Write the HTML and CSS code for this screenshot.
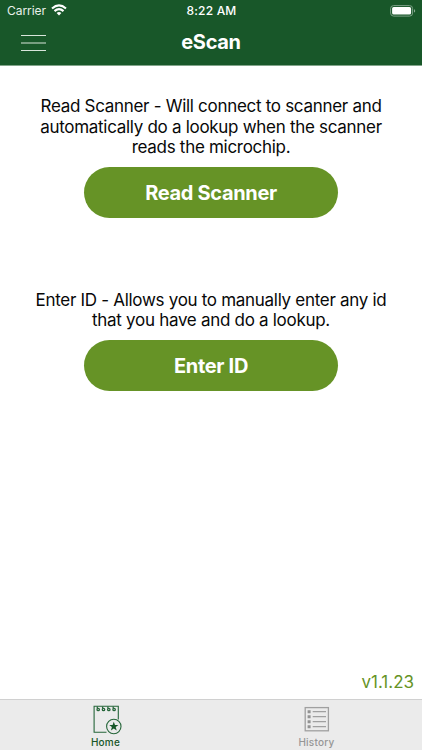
FILE: index.html
```
<!DOCTYPE html>
<html lang="en">
<head>
<meta charset="utf-8">
<title>eScan</title>
<link rel="stylesheet" href="styles.css">
</head>
<body>
<div class="app">
  <header class="header">
    <div class="status">
      <div class="carrier"><span>Carrier</span>
        <svg class="wifi" width="16" height="12" viewBox="0 0 16 12" fill="none" stroke="#fff" stroke-width="2.1"><path d="M1 4.5Q8 -1.6 15 4.5M3.5 7.1Q8 3.1 12.5 7.1"/><path d="M5.6 9Q8 7 10.4 9L8 11.5Z" fill="#fff" stroke="none"/></svg>
      </div>
      <span class="time">8:22 AM</span>
      <svg class="battery" width="26" height="12" viewBox="0 0 26 12"><rect x=".6" y=".6" width="22" height="10.5" rx="3" fill="none" stroke="#7da187"/><rect x="2.1" y="2.1" width="19" height="7.5" rx="1.6" fill="#fff"/><path d="M24 4.2Q25.2 4.5 25.2 5.9T24 7.6Z" fill="#8bab94"/></svg>
    </div>
    <div class="nav">
      <svg class="menu" width="25" height="18" viewBox="0 0 25 18" stroke="#d8e5da" stroke-width="1.1"><path d="M0 1.5H25M0 9H25M0 16.5H25"/></svg>
      <h1 class="title">eScan</h1>
    </div>
  </header>
  <main class="main">
    <section class="block">
      <p class="text">Read Scanner - Will connect to scanner and<br>automatically do a lookup when the scanner<br>reads the microchip.</p>
      <button class="button">Read Scanner</button>
    </section>
    <section class="block">
      <p class="text">Enter ID - Allows you to manually enter any id<br>that you have and do a lookup.</p>
      <button class="button">Enter ID</button>
    </section>
    <div class="version">v1.1.23</div>
  </main>
  <nav class="tabs">
    <div class="tab active">
      <svg class="icon" width="30" height="30" viewBox="0 0 30 30" fill="none" stroke="#26663a" stroke-width="1.1"><path d="M15.5 27.3H3.1V1.3H27.3V14.5"/><g stroke-width="1.3"><path d="M6.3 1.5V3.5M11.6 1.5V3.5M16.9 1.5V3.5M22.2 1.5V3.5"/><circle cx="7.2" cy="4.5" r="1.2"/><circle cx="12.5" cy="4.5" r="1.2"/><circle cx="17.8" cy="4.5" r="1.2"/><circle cx="23.1" cy="4.5" r="1.2"/></g><circle cx="22.8" cy="21.5" r="7.2"/><path transform="translate(-.5 -.5)" d="M23.3 17.2L24.5 20.4L27.9 20.5L25.2 22.6L26.2 25.9L23.3 24L20.4 25.9L21.4 22.6L18.7 20.5L22.1 20.4Z" fill="#185729" stroke="none"/></svg>
      <span>Home</span>
    </div>
    <div class="tab">
      <svg class="icon" width="30" height="30" viewBox="0 0 30 30" fill="none" stroke="#a0a0a0" stroke-width="1.3"><rect x="3.2" y="2.6" width="23.2" height="23.2"/><path d="M10.7 6.7H24M10.7 11.7H24M10.7 16.7H24M10.7 21.7H24"/><path d="M5.6 6.7H8.6M5.6 11.7H8.6M5.6 16.7H8.6M5.6 21.7H8.6" stroke="#929292" stroke-width="3"/></svg>
      <span>History</span>
    </div>
  </nav>
</div>
</body>
</html>
```
FILE: styles.css
```
* { box-sizing: border-box; }
body { margin: 0; font-family: Inter, "Liberation Sans", sans-serif; background: #fff; color: #080808; }
.app { width: 422px; height: 750px; display: flex; flex-direction: column; overflow: hidden; }
.header { height: 66px; background: #185729; color: #fff; border-bottom: 1px solid #82a48a; }
.status { height: 22px; display: grid; grid-template-columns: 1fr auto 1fr; padding: 0 6px 0 7px; font-size: 12px; line-height: 22px; }
.carrier { display: flex; gap: 5px; letter-spacing: -.05px; color: #e9f1ea; }
.wifi { margin-top: 4px; }
.time { font-weight: 500; letter-spacing: .2px; }
.battery { justify-self: end; margin-top: 5px; }
.nav { height: 43px; display: grid; grid-template-columns: 1fr auto 1fr; padding: 0 21px; }
.menu { margin-top: 12px; }
.title { margin: 0; font-size: 20px; line-height: 41px; font-weight: 700; letter-spacing: -.3px; }
.main { flex: 1; display: flex; flex-direction: column; padding-top: 30px; }
.block { display: flex; flex-direction: column; align-items: center; margin-bottom: 72px; }
.text { margin: 0 0 9px; font-size: 17px; line-height: 20.6px; letter-spacing: -.295px; text-align: center; white-space: nowrap; }
.button { width: 254px; height: 51px; border: 0; border-radius: 26px; padding: 2px 0 0; background: #669326; color: #fff; font: 700 20px/49px Inter, "Liberation Sans", sans-serif; letter-spacing: -.32px; }
.version { margin: auto 8px 7px auto; color: #669326; font-size: 17px; line-height: 20px; }
.tabs { height: 51px; display: flex; background: #ebebeb; border-top: 1px solid #d0d0d0; }
.tab { flex: 1; display: flex; flex-direction: column; align-items: center; padding-top: 5px; color: #969696; font-size: 10px; line-height: 14px; font-weight: 500; letter-spacing: .25px; }
.icon { overflow: visible; }
.active { color: #185729; }
```
